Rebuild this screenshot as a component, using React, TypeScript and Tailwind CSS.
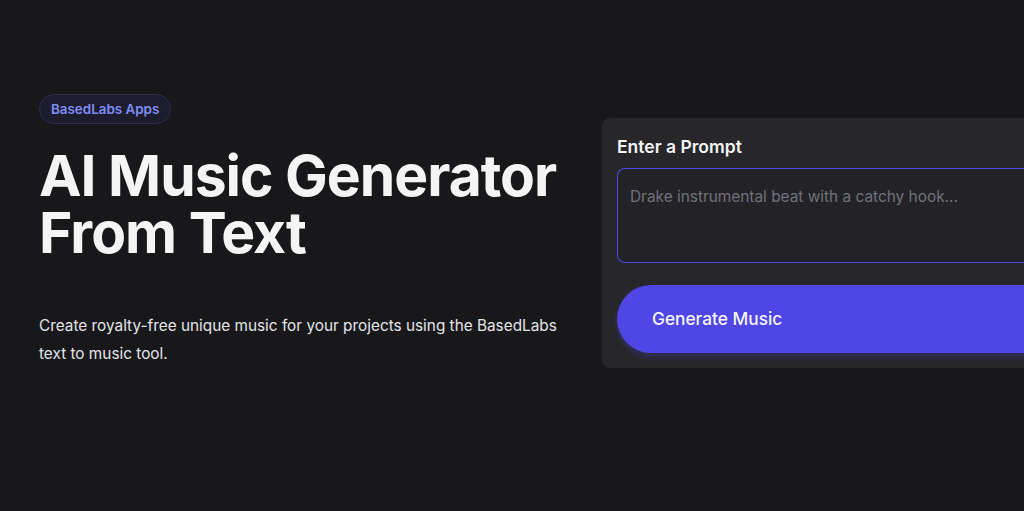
import React from "react";

export default function App() {
  return (
    <div
      className="w-[1024px] h-[511px] overflow-hidden bg-[#18181b] text-white"
      style={{ fontFamily: "Inter, 'Noto Sans', sans-serif" }}
    >
      <div className="flex pt-[94px] pl-[39px]">
        <div className="w-[563px] shrink-0">
          <div className="inline-flex h-[30px] items-center rounded-full border border-[#2e2b55] bg-[#1d1c2c] px-[11px] text-[13.4px] font-semibold text-[#818cf8]">
            BasedLabs Apps
          </div>
          <h1 className="mt-[23px] text-[57px] font-bold leading-[57px] tracking-[-1px] text-[#f4f4f5]">
            AI Music Generator
            <br />
            From Text
          </h1>
          <p className="mt-[51px] w-[530px] text-[15.35px] leading-[28px] text-[#e4e4e7]">
            Create royalty-free unique music for your projects using the BasedLabs text to music tool.
          </p>
        </div>
        <div className="mt-[24px] w-[460px] shrink-0 rounded-l-[8px] bg-[#27272a] pl-[15px] pt-[16px] pb-[15px]">
          <div className="text-[17.5px] font-semibold leading-[26px] text-[#f4f4f5]">Enter a Prompt</div>
          <div className="mt-[8px] h-[95px] rounded-l-[8px] border-[1.5px] border-r-0 border-[#4f46e5] bg-[#232327] px-[12px] pt-[16px] text-[15.4px] leading-[24px] text-[#71717a]">
            Drake instrumental beat with a catchy hook...
          </div>
          <div className="mt-[22px] flex h-[68px] items-center rounded-l-full bg-[#4f46e5] pl-[35px] text-[17.3px] font-medium text-[#f4f4f5] shadow-[0_4px_6px_rgba(79,70,229,0.25)]">
            Generate Music
          </div>
        </div>
      </div>
    </div>
  );
}
